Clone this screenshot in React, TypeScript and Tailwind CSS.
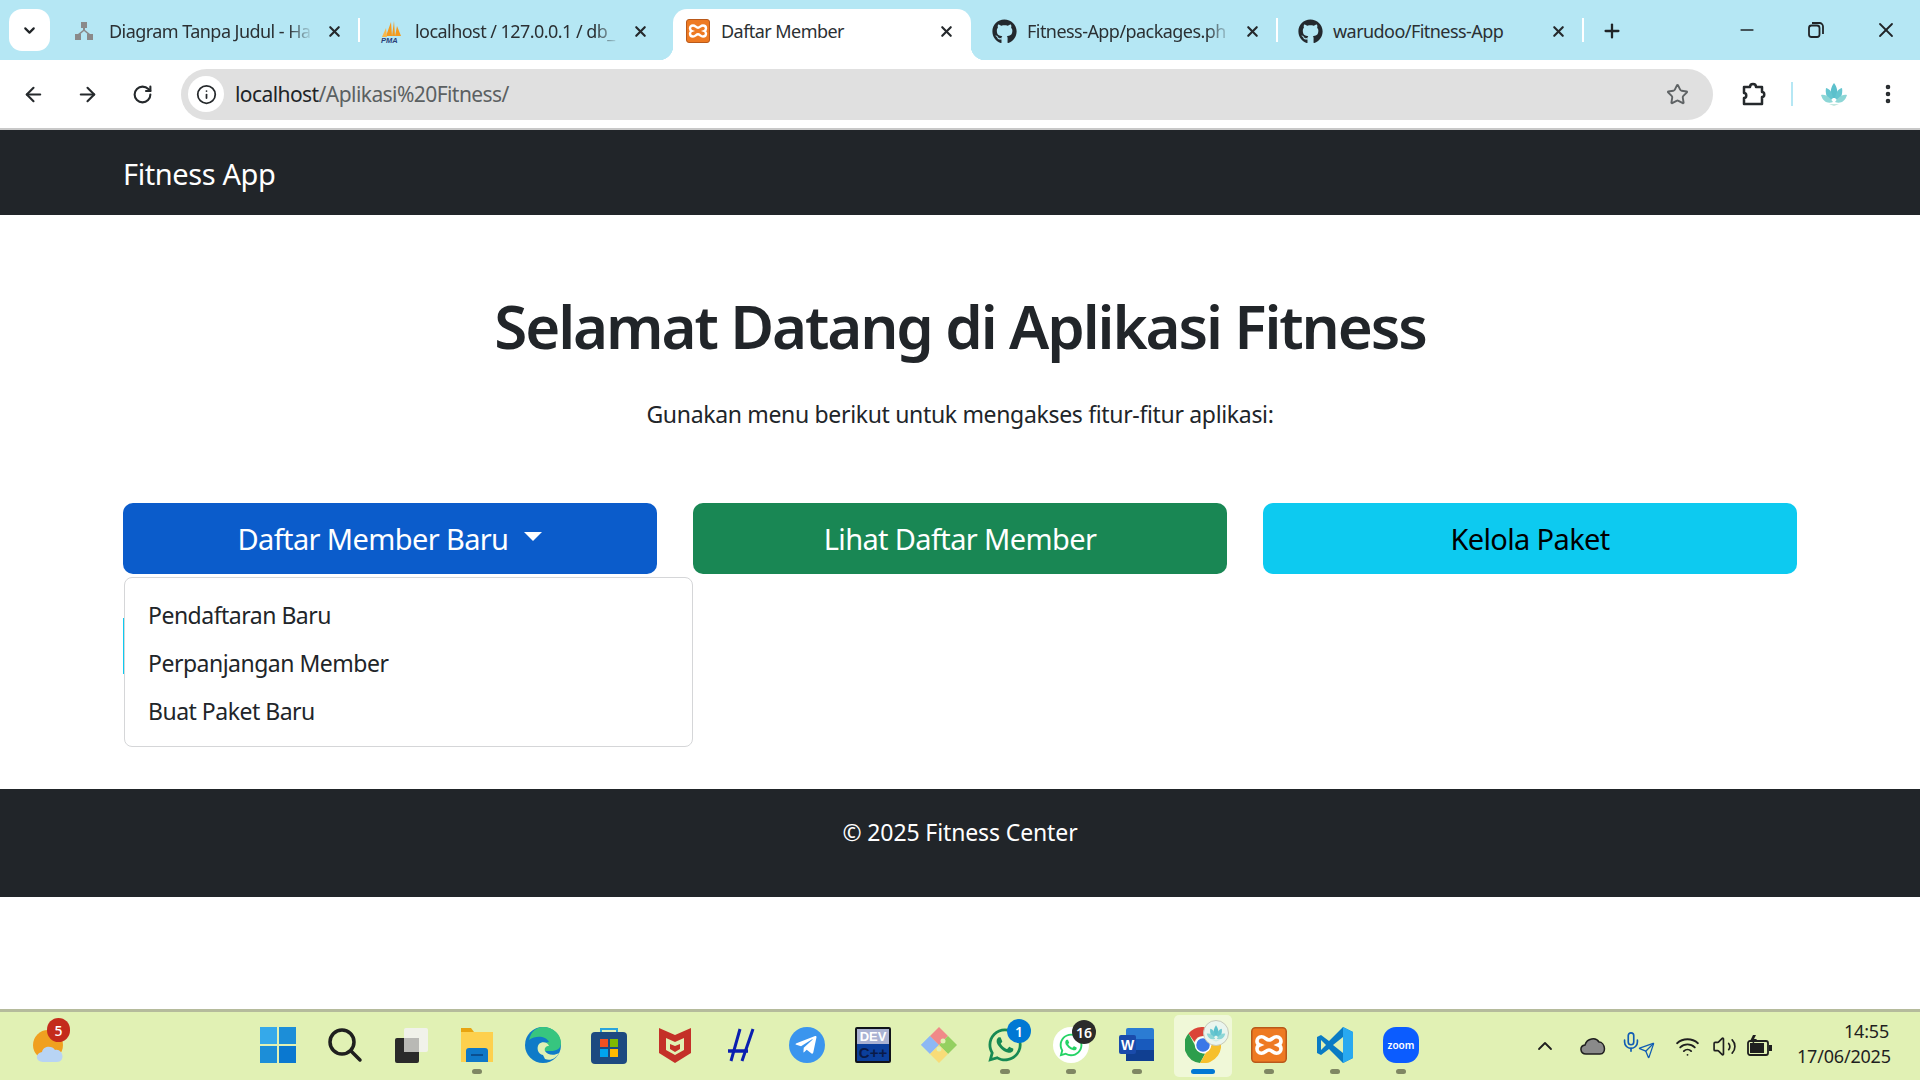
import React from "react";
import { ChevronDown, X, Plus, ArrowLeft, ArrowRight, RotateCw, Info, Star, Minus, MoreVertical, ChevronUp, Wifi, Volume2, Mic, Send } from "lucide-react";
import { FaGithub, FaWhatsapp, FaTelegramPlane } from "react-icons/fa";

const FONT = "font-['Noto_Sans',sans-serif]";

function LotusIcon({ size = 28 }: { size?: number }) {
  return (
    <svg width={size} height={size} viewBox="0 0 28 28">
      <path d="M14 3c3 4 4 8 3 15h-6c-1-7 0-11 3-15z" fill="#5cc0cc" />
      <path d="M6 8c4 1 6 4 7 10l-3 3C7 19 5 13 6 8z" fill="#66c6d0" />
      <path d="M22 8c-4 1-6 4-7 10l3 3c3-2 5-8 4-13z" fill="#66c6d0" />
      <path d="M1 15c4-1 8 1 12 7-5 2-10 0-12-7zM27 15c-4-1-8 1-12 7 5 2 10 0 12-7z" fill="#8dd6d6" />
      <path d="M9 24h10l-5 2z" fill="#c4e8e0" />
    </svg>
  );
}

function XamppIcon({ size = 24 }: { size?: number }) {
  return (
    <svg width={size} height={size} viewBox="0 0 24 24">
      <rect x="0.5" y="0.5" width="23" height="23" rx="2.5" fill="#ee7a22" stroke="#b9591a" />
      <path
        d="M7 6.5c2.4 0 3 2.2 5 2.2s2.6-2.2 5-2.2c2 0 3 1.400 3 3 0 1.500-.8 2.100-1.800 2.500 1 .4 1.800 1 1.800 2.500 0 1.600-1 3-3 3-2.400 0-3-2.200-5-2.200s-2.600 2.200-5 2.200c-2 0-3-1.400-3-3 0-1.500.8-2.100 1.800-2.500C4.800 11.600 4 11 4 9.500c0-1.600 1-3 3-3z"
        fill="none"
        stroke="#fff"
        strokeWidth="2.4"
      />
    </svg>
  );
}

function PmaIcon() {
  return (
    <svg width={24} height={24} viewBox="0 0 24 24">
      <path d="M6 17 11 3l1 14zM12 17l2-15 1 15zM15 17l2-10 4 10z" fill="#f39a1e" />
      <path d="M2 18 6 9l1 9z" fill="#f7b84a" />
      <text x="1" y="23.500" fontSize="7.500" fontWeight="700" fontStyle="italic" fill="#2a3f78" fontFamily="Liberation Sans, sans-serif">
        PMA
      </text>
    </svg>
  );
}

function DiagramIcon() {
  return (
    <svg width={20} height={20} viewBox="0 0 20 20" fill="#8a8a8a">
      <rect x="7" y="1" width="6" height="6" />
      <rect x="1" y="13" width="6" height="6" />
      <rect x="13" y="13" width="6" height="6" />
      <path d="M9 7h2v2l5 4h-2.500L10 10l-3.500 3H4l5-4z" />
    </svg>
  );
}

function ChromeTab({
  icon,
  title,
  active = false,
  fade = false,
  sep = false,
}: {
  icon: React.ReactNode;
  title: string;
  active?: boolean;
  fade?: boolean;
  sep?: boolean;
}) {
  return (
    <div className="relative flex h-[51px] w-[306px] shrink-0 items-start">
      {active && (
        <>
          <div className="absolute left-[5px] right-[3px] top-0 h-[51px] rounded-t-[14px] bg-white" />
          <span className="absolute bottom-0 left-[-9px] h-[14px] w-[14px] bg-[radial-gradient(circle_at_0_0,transparent_14px,#ffffff_14.500px)]" />
          <span className="absolute bottom-0 right-[-11px] h-[14px] w-[14px] bg-[radial-gradient(circle_at_100%_0,transparent_14px,#ffffff_14.500px)]" />
        </>
      )}
      <div className="relative flex h-[44px] w-full items-center pl-[18px] pr-[19px]">
        <span className="flex h-[24px] w-[28px] shrink-0 items-center justify-start">{icon}</span>
        <span
          className={`ml-[7px] w-[204px] whitespace-nowrap text-[18px] tracking-[-0.55px] text-[#2b3033] ${
            fade ? "[mask-image:linear-gradient(to_right,#000_88%,transparent_100%)]" : ""
          }`}
        >
          {title}
        </span>
        <X size={17} strokeWidth={3} className="ml-auto shrink-0 text-[#25292c]" />
      </div>
      {sep && <span className="absolute right-[2px] top-[9px] h-[24px] w-[2px] bg-white" />}
    </div>
  );
}

function BrowserChrome() {
  return (
    <div className={FONT}>
      <div className="flex h-[60px] items-start bg-[#b5e7f4] pt-[9px]">
        <div className="ml-[9px] flex h-[42px] w-[41px] shrink-0 items-center justify-center rounded-[13px] bg-white">
          <ChevronDown size={17} strokeWidth={3} className="text-[#202427]" />
        </div>
        <div className="ml-[6px] flex">
          <ChromeTab icon={<DiagramIcon />} title="Diagram Tanpa Judul - Ha" fade sep />
          <ChromeTab icon={<PmaIcon />} title="localhost / 127.0.0.1 / db_" fade />
          <ChromeTab icon={<XamppIcon />} title="Daftar Member" active />
          <ChromeTab icon={<FaGithub size={25} className="text-[#24292e]" />} title="Fitness-App/packages.ph" fade sep />
          <ChromeTab icon={<FaGithub size={25} className="text-[#24292e]" />} title="warudoo/Fitness-App" sep />
        </div>
        <Plus size={22} strokeWidth={2.5} className="ml-[15px] mt-[11px] shrink-0 text-[#202427]" />
        <div className="ml-auto flex items-center pr-[22px] pt-[9px] text-[#202427]">
          <Minus size={20} strokeWidth={2} />
          <svg width={18} height={18} viewBox="0 0 18 18" fill="none" stroke="currentColor" strokeWidth="1.800" className="ml-[50px]">
            <rect x="2" y="4.500" width="10.500" height="11.500" rx="2.500" />
            <path d="M5 2h7.500A3.500 3.500 0 0 1 16 5.500V13" />
          </svg>
          <X size={24} strokeWidth={1.800} className="ml-[49px]" />
        </div>
      </div>
      <div className="relative flex h-[70px] items-center rounded-t-[16px] border-b-2 border-[#c8c8c8] bg-white">
        <ArrowLeft size={23} strokeWidth={2.2} className="ml-[22px] text-[#25292c]" />
        <ArrowRight size={23} strokeWidth={2.2} className="ml-[31px] text-[#25292c]" />
        <RotateCw size={21} strokeWidth={2.4} className="ml-[33px] text-[#25292c]" />
        <div className="ml-[28px] flex h-[51px] w-[1532px] items-center rounded-full bg-[#e0e0e0] pl-[7px]">
          <div className="flex h-[36px] w-[36px] items-center justify-center rounded-full bg-white">
            <Info size={21} strokeWidth={2} className="text-[#25292c]" />
          </div>
          <span className="ml-[11px] mt-[1px] text-[21px] tracking-[-0.57px] text-[#202427]">
            localhost<span className="text-[#5b6062]">/Aplikasi%20Fitness/</span>
          </span>
          <Star size={23} strokeWidth={2} className="ml-auto mr-[24px] text-[#5f6365]" />
        </div>
        <svg width={26} height={26} viewBox="0 0 26 26" fill="none" stroke="#25292c" strokeWidth="2.500" className="ml-[27px]">
          <path d="M4 6h6c0-4 6-4 6 0h6v5c3 0 3 5 0 5v7H4v-6c3 0 3-5 0-5z" strokeLinejoin="round" />
        </svg>
        <span className="ml-[25px] h-[24px] w-[2px] bg-[#b5e7f4]" />
        <span className="ml-[27px]">
          <LotusIcon />
        </span>
        <MoreVertical size={24} strokeWidth={2.6} className="ml-[28px] text-[#25292c]" />
      </div>
    </div>
  );
}

function SiteContent() {
  return (
    <div className={`${FONT} text-[#212529]`}>
      <nav className="flex h-[85px] items-start bg-[#212529] pl-[123px] pt-[22px]">
        <span className="text-[29px] tracking-[-0.4px] text-white">Fitness App</span>
      </nav>
      <main className="mx-auto w-[1674px]">
        <h1 className="pt-[75px] text-center text-[60px] font-semibold leading-[72px] tracking-[-2.12px]">
          Selamat Datang di Aplikasi Fitness
        </h1>
        <p className="mt-[37px] text-center text-[23px] leading-[30px] tracking-[-0.33px]">
          Gunakan menu berikut untuk mengakses fitur-fitur aplikasi:
        </p>
        <div className="relative mt-[74px] grid grid-cols-3 gap-[36px] text-[29px] tracking-[-0.63px]">
          <button type="button" className="flex h-[71px] items-center justify-center gap-[16px] rounded-[10px] bg-[#0b5ccb] text-white">
            Daftar Member Baru
            <span className="mt-[-4px] h-0 w-0 border-x-[9px] border-t-[9px] border-x-transparent border-t-white" />
          </button>
          <button type="button" className="h-[71px] rounded-[10px] bg-[#198754] text-white">
            Lihat Daftar Member
          </button>
          <button type="button" className="h-[71px] rounded-[10px] bg-[#0dcaf0] text-black">
            Kelola Paket
          </button>
          <div className="absolute left-[1px] top-[74px] z-10 w-[569px] rounded-[8px] border border-[#d5d6d8] bg-white pb-[11px] pt-[13px] text-[23px] tracking-[-0.5px] text-[#212529]">
            <div className="flex h-[48px] items-center pl-[23px]">Pendaftaran Baru</div>
            <div className="flex h-[48px] items-center pl-[23px]">Perpanjangan Member</div>
            <div className="flex h-[48px] items-center pl-[23px]">Buat Paket Baru</div>
          </div>
        </div>
        <div className="mb-[115px] mt-[44px] h-[56px] w-[2px] bg-[#0dcaf0]" />
      </main>
      <footer className="flex h-[108px] justify-center bg-[#212529] pt-[26px] text-[23px] tracking-[-0.12px] text-white">
        © 2025 Fitness Center
      </footer>
    </div>
  );
}

function RunDot({ color = "#7f8763", wide = false }: { color?: string; wide?: boolean }) {
  return <span className={`absolute bottom-[3px] left-1/2 h-[5px] -translate-x-1/2 rounded-full ${wide ? "w-[24px]" : "w-[10px]"}`} style={{ backgroundColor: color }} />;
}

function Badge({ label, color }: { label: string; color: string }) {
  return (
    <span
      className="absolute right-[-7px] top-[-7px] flex h-[24px] w-[24px] items-center justify-center rounded-full text-[14px] font-semibold text-white"
      style={{ backgroundColor: color }}
    >
      {label}
    </span>
  );
}

function TaskIcon({ children, dot = false, active = false }: { children: React.ReactNode; dot?: boolean; active?: boolean }) {
  return (
    <div className="relative flex h-[62px] w-[66px] shrink-0 items-center justify-center">
      {active && <span className="absolute inset-x-[4px] inset-y-0 rounded-[5px] bg-[#f0f8d8]" />}
      <span className="relative mb-[2px] flex items-center justify-center">{children}</span>
      {dot && <RunDot />}
      {active && <RunDot color="#0078d4" wide />}
    </div>
  );
}

function Taskbar() {
  return (
    <div className={`${FONT} relative flex h-[71px] items-center border-t-[3px] border-[#b5bb9c] bg-[#e1f1b4]`}>
      {/* weather */}
      <div className="absolute left-[32px] top-[9px]">
        <svg width={36} height={46} viewBox="0 0 36 46">
          <circle cx="16" cy="24" r="15" fill="#f0a020" />
          <path d="M11 41c-8 0-8-9-1-10 1-6 10-7 13-2 8-2 11 12 2 12z" fill="#b8d4f4" />
        </svg>
        <span className="absolute left-[15px] top-[-3px] flex h-[24px] w-[23px] items-center justify-center rounded-full bg-[#c42b1c] text-[14px] font-medium text-white">
          5
        </span>
      </div>
      <div className="ml-[246px] flex h-[62px] items-center">
        <TaskIcon>
          <svg width={36} height={36} viewBox="0 0 36 36" className="ml-[-3px]">
            <rect width="17" height="17" fill="#35a9ea" />
            <rect x="19" width="17" height="17" fill="#1c8ed8" />
            <rect y="19" width="17" height="17" fill="#1c8ed8" />
            <rect x="19" y="19" width="17" height="17" fill="#0a78d0" />
          </svg>
        </TaskIcon>
        <TaskIcon>
          <svg width={36} height={36} viewBox="0 0 36 36" fill="none" stroke="#1f1f1f" strokeWidth="3.500">
            <circle cx="15" cy="15" r="12" />
            <path d="M24 24l9 9" strokeLinecap="round" />
          </svg>
        </TaskIcon>
        <TaskIcon>
          <svg width={33} height={35} viewBox="0 0 33 35">
            <rect x="0" y="10" width="24" height="25" rx="2" fill="#2a2a2a" />
            <rect x="9" y="0" width="24" height="24" rx="2" fill="#f1f2ea" />
            <rect x="9" y="10" width="15" height="14" fill="#b9b9b5" />
          </svg>
        </TaskIcon>
        <TaskIcon dot>
          <svg width={36} height={36} viewBox="0 0 36 36">
            <path d="M2 1h10l3 4h19v30H2z" fill="#e8a410" />
            <rect x="2" y="5" width="32" height="30" fill="#fdd04e" />
            <path d="M7 35V24c0-2 1-3 3-3h16c2 0 3 1 3 3v11z" fill="#0f78c8" />
            <rect x="12" y="27" width="12" height="2" fill="#0a4f90" />
          </svg>
        </TaskIcon>
        <TaskIcon>
          <svg width={36} height={36} viewBox="0 0 36 36">
            <circle cx="18" cy="18" r="18" fill="#0f7bc8" />
            <path d="M18 0c10 0 18 7 18 16 0 6-5 8-10 8H18c-2-5 1-9 6-9-3-6-13-7-20-2C6 5 11 0 18 0z" fill="#37c57f" />
            <path d="M18 28c-5-1-7-7-4-11 3-3 9-2 10 2-3 0-5 2-4 5 2 4 9 5 14 2-3 6-9 8-14 6z" fill="#e1f1b4" />
          </svg>
        </TaskIcon>
        <TaskIcon>
          <svg width={36} height={38} viewBox="0 0 36 38">
            <path d="M10 8V3h16v5" fill="none" stroke="#29a4dc" strokeWidth="2" />
            <rect y="6" width="36" height="32" rx="4" fill="#1d4a80" />
            <rect x="9" y="13" width="8" height="8" fill="#f25022" />
            <rect x="19" y="13" width="8" height="8" fill="#7fba00" />
            <rect x="9" y="23" width="8" height="8" fill="#00a4ef" />
            <rect x="19" y="23" width="8" height="8" fill="#ffb900" />
          </svg>
        </TaskIcon>
        <TaskIcon>
          <svg width={32} height={36} viewBox="0 0 32 36">
            <path d="M0 1l16 7 16-7v25l-16 10L0 26z" fill="#c43028" />
            <path d="M7 11l9 4 9-4v12l-9 5-9-5z" fill="#e1f1b4" />
            <path d="M11 17l5 2 5-2v5l-5 3-5-3z" fill="#c43028" />
          </svg>
        </TaskIcon>
        <TaskIcon>
          <svg width={28} height={36} viewBox="0 0 28 36" fill="none" stroke="#0a1fb0" strokeWidth="3">
            <path d="M13 2L4 34M26 2L15 34" />
            <path d="M1 24h20" strokeWidth="3.500" />
          </svg>
        </TaskIcon>
        <TaskIcon>
          <span className="flex h-[36px] w-[36px] items-center justify-center rounded-full bg-[#3a95ee]">
            <FaTelegramPlane size={24} className="mr-[2px] text-white" />
          </span>
        </TaskIcon>
        <TaskIcon>
          <span className="flex h-[36px] w-[36px] flex-col items-center overflow-hidden rounded-[2px] border-2 border-[#10131a] bg-[#0b3f9c] font-['Liberation_Sans',sans-serif] font-bold leading-none">
            <span className="flex h-[15px] w-full items-center justify-center bg-[#aab2d2] text-[13px] text-white">DEV</span>
            <span className="mt-[1px] text-[15px] text-[#0a1a48]">C++</span>
          </span>
        </TaskIcon>
        <TaskIcon>
          <svg width={36} height={36} viewBox="0 0 36 36">
            <path d="M18 18L0 18l9-9z" fill="#8db8f4" />
            <path d="M0 18l9 9 9-9-9-9z" fill="#8db8f4" />
            <path d="M9 9l9-9 9 9-9 9z" fill="#f08a88" />
            <path d="M18 18l9-9 9 9-9 9z" fill="#94d060" />
            <path d="M9 27l9-9 9 9-9 9z" fill="#f8dc78" />
            <circle cx="22" cy="14" r="2.500" fill="#e1f1b4" />
            <circle cx="18" cy="22" r="2.500" fill="#e1f1b4" />
          </svg>
        </TaskIcon>
        <TaskIcon dot>
          <FaWhatsapp size={38} className="text-[#178a54]" />
          <Badge label="1" color="#0078d4" />
        </TaskIcon>
        <TaskIcon dot>
          <span className="flex h-[36px] w-[36px] items-center justify-center rounded-full bg-white">
            <FaWhatsapp size={26} className="text-[#25d366]" />
          </span>
          <Badge label="16" color="#2b2b2b" />
        </TaskIcon>
        <TaskIcon dot>
          <svg width={36} height={34} viewBox="0 0 36 34">
            <rect x="7" y="0" width="28" height="33" rx="2" fill="#2b7cd3" />
            <rect x="7" y="11" width="28" height="11" fill="#185abd" />
            <rect x="7" y="22" width="28" height="11" fill="#103f91" />
            <rect x="0" y="7" width="17" height="19" rx="2" fill="#1a4bab" />
            <text x="2" y="22" fontSize="14" fontWeight="700" fill="#fff" fontFamily="Liberation Sans, sans-serif">
              W
            </text>
          </svg>
        </TaskIcon>
        <TaskIcon active>
          <svg width={36} height={36} viewBox="0 0 36 36">
            <path d="M18 0a18 18 0 0 1 15.600 9H18a9 9 0 0 0-8.500 6L3.500 6.600A18 18 0 0 1 18 0z" fill="#db4437" />
            <path d="M3.500 6.600L11 20a9 9 0 0 0 9 6.800L15 36A18 18 0 0 1 3.500 6.600z" fill="#2d9e4c" />
            <path d="M33.600 9A18 18 0 0 1 15 36l7.800-13.500A9 9 0 0 0 25 9z" fill="#f6c02c" />
            <circle cx="18" cy="18" r="7.500" fill="#3b78e7" stroke="#fff" strokeWidth="1.500" />
          </svg>
          <span className="absolute right-[-8px] top-[-7px] flex h-[26px] w-[26px] items-center justify-center rounded-full border border-[#c6c8b8] bg-[#eaf5ee]">
            <LotusIcon size={20} />
          </span>
        </TaskIcon>
        <TaskIcon dot>
          <XamppIcon size={36} />
        </TaskIcon>
        <TaskIcon dot>
          <svg width={36} height={36} viewBox="0 0 36 36">
            <path d="M26 0l10 5v26l-10 5-14-14-8 6-4-2V10l4-2 8 6z" fill="#0a7bc4" />
            <path d="M26 0l10 5v26l-10 5z" fill="#29a9f0" />
            <path d="M26 10l-10 8 10 8z" fill="#e1f1b4" />
            <path d="M4 13l5 5-5 5z" fill="#e1f1b4" />
          </svg>
        </TaskIcon>
        <TaskIcon dot>
          <span className="flex h-[36px] w-[36px] items-center justify-center rounded-[13px] bg-[#0b5cff] text-[10px] font-semibold text-white">
            zoom
          </span>
        </TaskIcon>
      </div>
      {/* system tray */}
      <div className="ml-auto flex items-center pr-[31px] text-[#1f1f1f]">
        <ChevronUp size={24} strokeWidth={1.8} />
        <svg width={26} height={18} viewBox="0 0 26 18" className="ml-[23px]">
          <path d="M6 17c-6 0-7-8-1-9 2-7 11-8 14-3 6 0 8 12 1 12z" fill="#8a8a8a" stroke="#1f1f1f" strokeWidth="1.500" />
        </svg>
        <Mic size={22} strokeWidth={1.8} className="ml-[14px] mt-[-8px] text-[#0f5cb4]" />
        <Send size={17} strokeWidth={1.8} className="ml-[-4px] mt-[8px] text-[#0f5cb4]" />
        <Wifi size={25} strokeWidth={1.8} className="ml-[20px]" />
        <Volume2 size={25} strokeWidth={1.6} className="ml-[12px]" />
        <svg width={26} height={22} viewBox="0 0 26 22" className="ml-[10px]">
          <rect x="1" y="6" width="20" height="14" rx="2" fill="none" stroke="#1f1f1f" strokeWidth="1.800" />
          <rect x="3" y="8" width="14" height="10" fill="#1f1f1f" />
          <rect x="22" y="10" width="3" height="6" fill="#1f1f1f" />
          <path d="M6 0L3 6h3l-1 4 5-6H7l2-4z" fill="#1f1f1f" />
        </svg>
        <div className="mb-[4px] ml-[24px] w-[92px] whitespace-nowrap text-right text-[18px] leading-[25px] tracking-[-0.2px]">
          <div>14:55</div>
          <div>17/06/2025</div>
        </div>
      </div>
    </div>
  );
}

export default function App() {
  return (
    <div className="flex h-[1080px] w-[1920px] flex-col overflow-hidden bg-white">
      <BrowserChrome />
      <SiteContent />
      <div className="flex-1" />
      <Taskbar />
    </div>
  );
}
